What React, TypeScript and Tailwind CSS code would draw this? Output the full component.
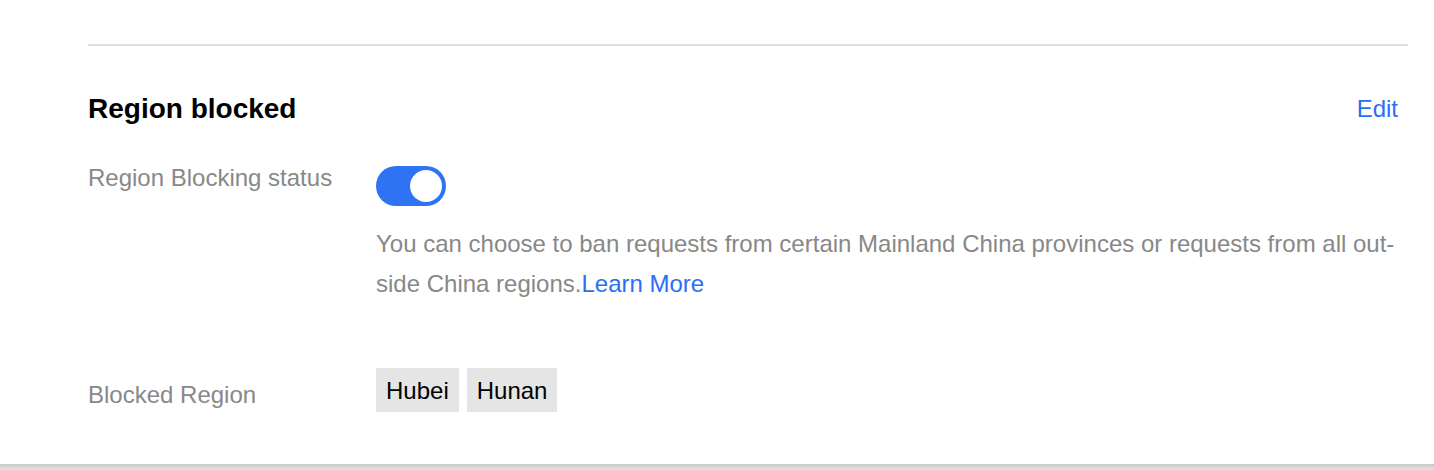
import React, { useState } from 'react';

const Toggle = ({ on, onChange }: { on: boolean; onChange: () => void }) => (
  <button
    onClick={onChange}
    className={`w-[70px] h-[40px] rounded-full p-[4px] flex items-center ${on ? 'bg-[#2f73f5] justify-end' : 'bg-[#cfcfcf] justify-start'}`}
  >
    <span className="block w-[32px] h-[32px] rounded-full bg-white" />
  </button>
);

const App = () => {
  const [enabled, setEnabled] = useState(true);
  const regions = ['Hubei', 'Hunan'];

  return (
    <div className="w-[1434px] h-[470px] bg-white flex flex-col font-['Liberation_Sans',Arial,sans-serif]">
      <div className="flex-1 pl-[88px] pr-[26px] pt-[44px]">
        <div className="h-[2px] bg-[#e0e0e0]" />

        {/* Header */}
        <div className="flex items-center justify-between mt-[47px] pr-[10px]">
          <h2 className="text-[28px] leading-[32px] font-bold text-black">Region blocked</h2>
          <button className="text-[24px] leading-[32px] text-[#2a6ff3]">Edit</button>
        </div>

        {/* Status row */}
        <div className="grid grid-cols-[288px_1fr] mt-[37px]">
          <div className="text-[24px] leading-[32px] text-[#888]">Region Blocking status</div>
          <div>
            <div className="mt-[4px]">
              <Toggle on={enabled} onChange={() => setEnabled(!enabled)} />
            </div>
            <p className="mt-[18px] text-[24px] leading-[40px] text-[#888]">
              You can choose to ban requests from certain Mainland China provinces or requests from all out-side China regions.
              <a href="#" className="text-[#2a6ff3]">Learn More</a>
            </p>
          </div>
        </div>

        {/* Blocked regions */}
        <div className="grid grid-cols-[288px_1fr] mt-[64px]">
          <div className="mt-[11px] text-[24px] leading-[32px] text-[#888]">Blocked Region</div>
          <div className="flex gap-[8px]">
            {regions.map((r) => (
              <span key={r} className="bg-[#e5e5e5] px-[10px] pt-[7px] pb-[5px] text-[24px] leading-[32px] text-black">
                {r}
              </span>
            ))}
          </div>
        </div>
      </div>
      <div className="h-[6px] bg-gradient-to-b from-[#c9c9c9] to-[#e3e3e3]" />
    </div>
  );
};

export default App;
